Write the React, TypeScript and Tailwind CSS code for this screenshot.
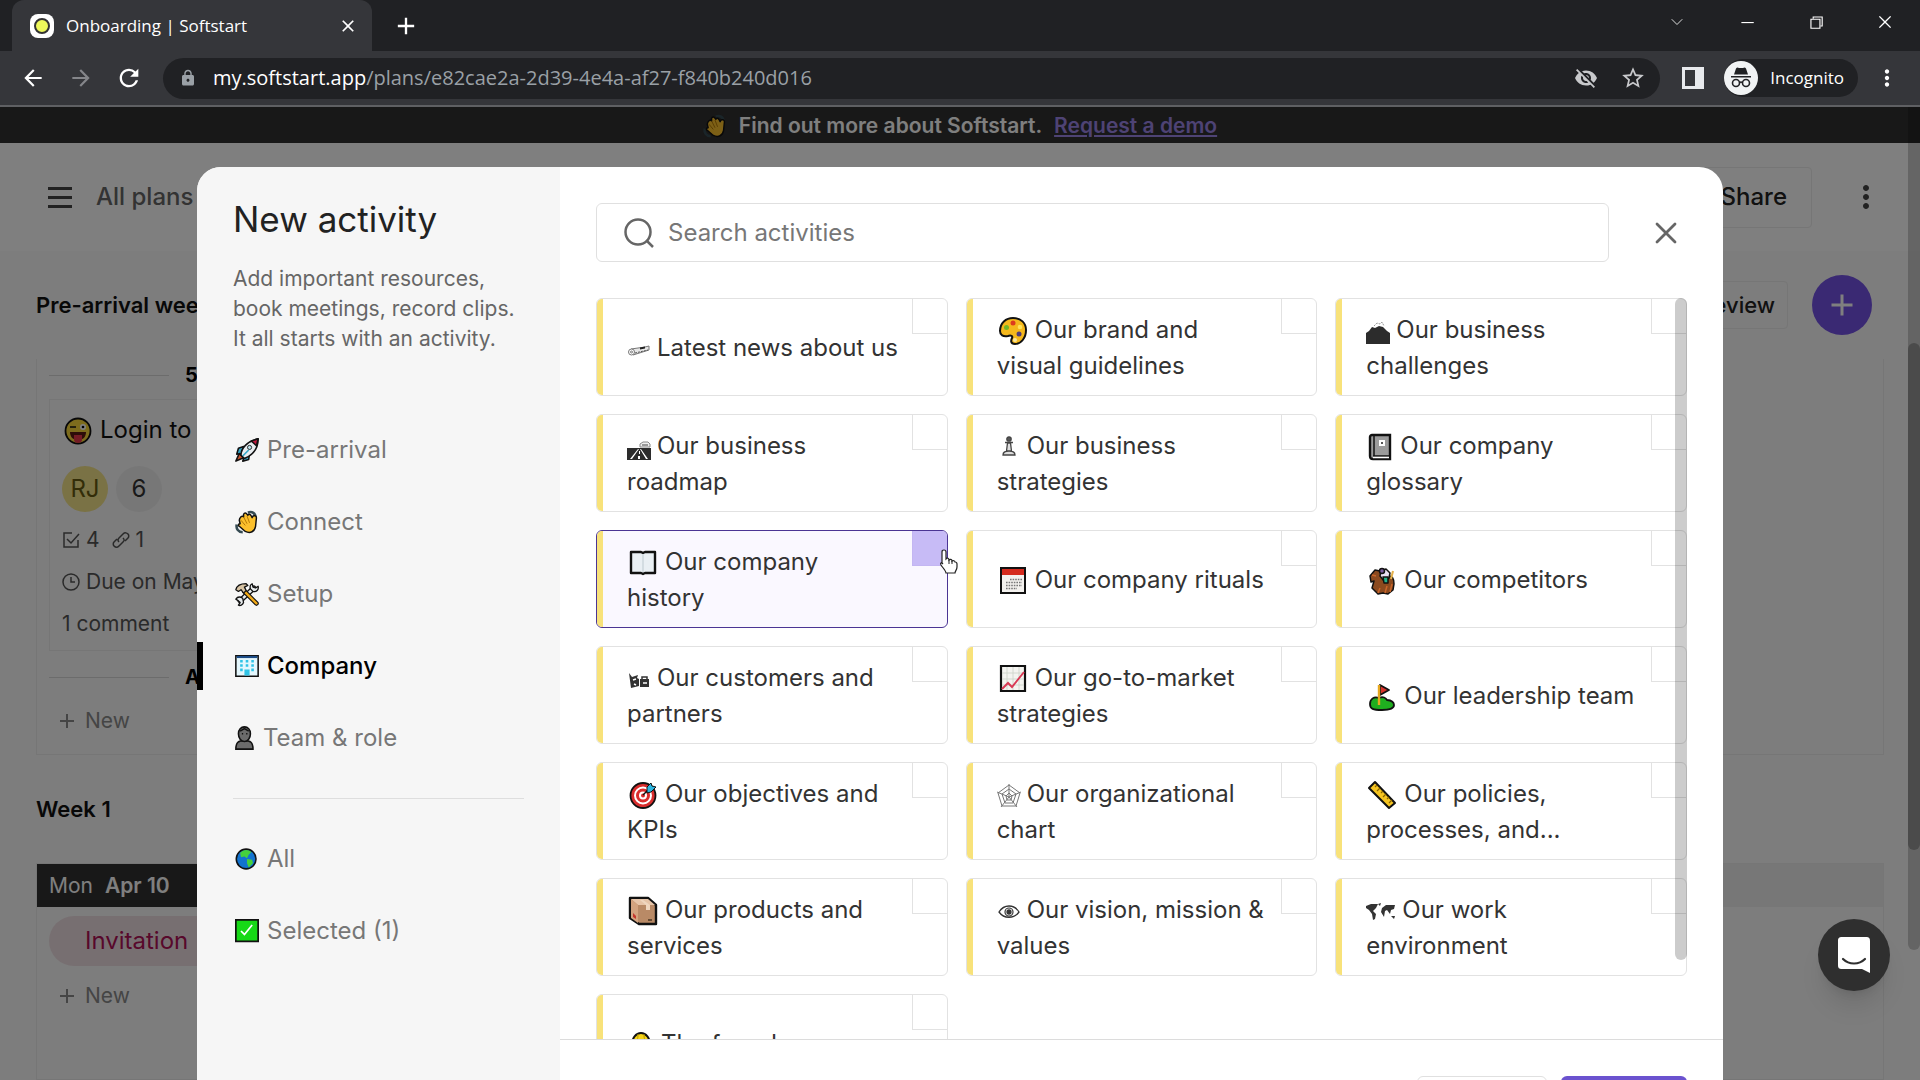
import type { ReactNode } from 'react';
import { ChevronDown } from 'lucide-react';
import {
  MdAdd,
  MdArrowBack,
  MdArrowForward,
  MdClose,
  MdLock,
  MdMoreVert,
  MdRefresh,
  MdStarBorder,
  MdVisibilityOff,
} from 'react-icons/md';
import {
  VscChromeClose,
  VscChromeMinimize,
  VscChromeRestore,
} from 'react-icons/vsc';

// 28x28 drawings, black outline like the system emoji set
const glyphs: Record<string, ReactNode> = {
  rocket: (
    <g stroke="#111" strokeWidth="1.8" strokeLinejoin="round">
      <path d="M10 10 4 12 2 19l6-1zM17 18l-1 7-7 2 2-6z" fill="#35a7c9" />
      <path d="M5 18 1 27l9-4z" fill="#c9532e" />
      <path d="M7 20C7 12 14 4 27 1c0 11-6 19-16 23z" fill="#e9edf0" />
      <path d="M19 3.500 27 1l-2 8z" fill="#c3183f" />
      <circle cx="17" cy="11" r="2.400" fill="#bfe4ee" strokeWidth="1" />
      <path d="M9 21l7-7" stroke="#35a7c9" strokeWidth="2" />
    </g>
  ),
  wave: (
    <g stroke="#111" strokeWidth="1.700" strokeLinejoin="round">
      <path d="M15 3c5-2 9 1 9 6M2 17c-1 5 2 9 7 9" fill="none" stroke="#354a52" strokeWidth="3" />
      <path
        d="M7 8c1-1 2-1 3 0V5c1-2 3-2 4 0l1 1c1-2 3-1 4 1l1 2 1-2c2-1 4 0 4 2l-1 10c-1 6-6 9-12 6L5 19c-2-1-1-3 1-3l-1-4c0-2 1-3 2-4z"
        fill="#fbc02d"
      />
      <path d="M10 8l4 8M14 7l3 8M7 12l5 6" stroke="#a86f00" strokeWidth="1" />
    </g>
  ),
  tools: (
    <g strokeLinecap="round" strokeLinejoin="round">
      <path d="M22 7 6 22" stroke="#111" strokeWidth="6" />
      <path d="M22 7 6 22" stroke="#e8ecee" strokeWidth="3" />
      <path d="M20 2l1 4 3 1 3-2c1 4-2 7-6 6l-3-3c-1-3 0-5 2-6zM1 20c2-3 5-3 8-1l1 5c-1 3-4 4-6 3l2-3-2-2z" fill="#e8ecee" stroke="#111" strokeWidth="1.500" />
      <path d="M11 11l14 14" stroke="#111" strokeWidth="5.500" />
      <path d="M11 11l14 14" stroke="#f0a818" strokeWidth="2.800" />
      <path d="M1 9c1-4 5-7 12-7l2 2-4 2 2 4-3 3-3-4-3 2z" fill="#d8c4a4" stroke="#111" strokeWidth="1.500" />
    </g>
  ),
  office: (
    <g>
      <path d="M1 2h26v24H1z" fill="#e4f7fd" stroke="#111" strokeWidth="1.800" />
      <path d="M2 3.500h24" stroke="#1c4c86" strokeWidth="2.500" />
      <path
        d="M6 7h3v3H6zM12.500 7h3v3h-3zM19 7h3v3h-3zM6 12h3v3H6zM12.500 12h3v3h-3zM19 12h3v3h-3zM6 17h3v3H6zM19 17h3v3h-3zM11 18h6v7h-6z"
        fill="#2fc3e6"
      />
    </g>
  ),
  person: (
    <g fill="#6b6b6b" stroke="#111" strokeWidth="1.800">
      <path d="M1 27c0-8 3-10 10-10s10 2 10 10z" />
      <path d="M4 9c0-5 3-8 7-8s7 3 7 8-3 9-7 9-7-4-7-9z" />
      <path d="M8 9h1.500M13 9h1.500M6 6l5-3 5 3" fill="none" />
    </g>
  ),
  globe: (
    <g>
      <circle cx="13" cy="14" r="11.500" fill="#1273cf" stroke="#111" strokeWidth="1.800" />
      <path d="M6 7c4-5 10-4 13-1l-3 3-2 4-3-2-4 1zM14 14l6 1 1 4-5 5-2-5z" fill="#45d13c" />
    </g>
  ),
  check: (
    <g>
      <path d="M1 1h26v25H1z" fill="#16d916" stroke="#111" strokeWidth="2" />
      <path d="M7 14l4 4 9-11" fill="none" stroke="#fff" strokeWidth="2" />
    </g>
  ),
  wink: (
    <g>
      <circle cx="14" cy="14" r="12.500" fill="#fbd93b" stroke="#111" strokeWidth="1.800" />
      <path d="M6 15h16c0 5-3 8-8 8s-8-3-8-8z" fill="#5b1a12" />
      <path d="M10 18h8v5c0 4-8 4-8 0z" fill="#e8384b" />
      <circle cx="19" cy="10" r="3" fill="#fff" />
      <circle cx="19" cy="10" r="1.300" />
      <path d="M6 10h6" stroke="#111" strokeWidth="1.500" />
    </g>
  ),
  palette: (
    <g>
      <path
        d="M14 1c8 0 13 5 13 12 0 8-5 14-11 14-5 0-4-4-3-6s-1-3-4-2c-5 1-8-1-8-5C1 6 7 1 14 1z"
        fill="#f5b81c"
        stroke="#111"
        strokeWidth="2"
      />
      <circle cx="14" cy="6" r="2.500" fill="#dd3b1e" />
      <circle cx="7.500" cy="10.500" r="2.500" fill="#74b526" />
      <circle cx="21" cy="10" r="2.300" fill="#ffe35a" />
      <circle cx="20" cy="17" r="2.500" fill="#503d7c" />
      <circle cx="16" cy="23" r="2" fill="#f7e7a0" />
    </g>
  ),
  notebook: (
    <g>
      <path d="M4 2h18v24H5c-2 0-3-1-3-3V4c0-1 1-2 2-2z" fill="#9b9b9b" stroke="#111" strokeWidth="2.400" />
      <path d="M6 3v20M5 23h16" stroke="#111" strokeWidth="1.500" />
      <path d="M5 24.500h16" stroke="#fff" strokeWidth="1.500" />
      <path d="M11 7h6v6h-6z" fill="#fff" />
      <path d="M13 9h2v2h-2z" fill="#555" />
    </g>
  ),
  book: (
    <g>
      <path
        d="M2 3h10l2 1 2-1h10v21H16l-2 1-2-1H2z"
        fill="#e9eff4"
        stroke="#111"
        strokeWidth="2.400"
        strokeLinejoin="round"
      />
      <path d="M14 5v18" stroke="#d3dce2" strokeWidth="2" />
    </g>
  ),
  calendar: (
    <g>
      <path d="M2 1h24v25H2z" fill="#f3f1ee" stroke="#111" strokeWidth="2" />
      <path d="M3 2h22v6H3z" fill="#d52b1e" />
      <path d="M11 12.500h12M7 15.500h16M7 18.500h16M7 21.500h11" stroke="#777" strokeWidth="1.600" strokeDasharray="1.600 1" />
    </g>
  ),
  horse: (
    <g stroke="#111" strokeWidth="1.500" strokeLinejoin="round">
      <path d="M2 9l5-6 5 1 3 7 6-2c4 0 5 4 5 8l-1 6-5 4-5-1-5 1-6-6 2-7-3 1z" fill="#8b4a1f" />
      <path d="M12 21l-2 5M19 19l-2 7M24 17l-2 8M4 8l4 1" stroke="#c9652a" />
      <path d="M13 4l5-2 4 4-1 5-5 3-4-5z" fill="#e8e0f4" />
      <path d="M15 10h5v6h-4z" fill="#21b28a" />
      <circle cx="14" cy="4" r="2.500" fill="#7b5ea7" />
      <path d="M25 4l-2 8" stroke="#e3b04b" strokeWidth="2" />
    </g>
  ),
  chart: (
    <g>
      <path d="M2 1h24v25H2z" fill="#f4f4f0" stroke="#111" strokeWidth="2.200" />
      <path d="M8 2v23M14 2v23M20 2v23M3 8h22M3 14h22M3 20h22" stroke="#ccd2c8" strokeWidth="0.800" />
      <path d="M3 24l6-6 4 4 12-15" fill="none" stroke="#d93a55" strokeWidth="2" />
    </g>
  ),
  golf: (
    <g stroke="#111" strokeWidth="1.800" strokeLinejoin="round">
      <path d="M2 21c0-5 4-8 9-6 4-2 7 0 8 2 5 0 7 3 7 5 0 3-3 5-12 5S2 26 2 21z" fill="#1fae1f" />
      <path d="M12 2l9 5-9 5z" fill="#d8342c" />
      <path d="M11 2v20" stroke="#e6a71f" strokeWidth="2.400" />
    </g>
  ),
  target: (
    <g>
      <circle cx="14" cy="14.500" r="12.500" fill="#d92d2d" stroke="#111" strokeWidth="1.800" />
      <circle cx="14" cy="14.500" r="8" fill="none" stroke="#fff" strokeWidth="2" />
      <circle cx="14" cy="14.500" r="3" fill="none" stroke="#fff" strokeWidth="2" />
      <path d="M14 14l9-9" stroke="#111" strokeWidth="1.500" />
      <path d="M18 6l4-4 1 3 4 1-5 5-4 1z" fill="#2bb5e0" stroke="#111" />
    </g>
  ),
  ruler: (
    <g>
      <path d="M7 1 27 22l-6 5L1 7z" fill="#f6c521" stroke="#111" strokeWidth="2" strokeLinejoin="round" />
      <path d="M9 4 7 6M12 7l-3 3M15 10l-2 2M18 13l-3 3M21 16l-2 2M24 19l-3 3" stroke="#8a6500" strokeWidth="1.200" />
    </g>
  ),
  box: (
    <g>
      <path d="M1 1h18l8 7v19H10l-9-6z" fill="#b98a66" stroke="#111" strokeWidth="2.400" strokeLinejoin="round" />
      <path d="M2 2h17l7 6H9z" fill="#e6c4a8" />
      <path d="M9 8v18L2 21V2z" fill="#d3a37f" />
      <path d="M14 3l7 5v5h-4V8l-6-5z" fill="#efd6bf" />
      <path d="M4 16l3 3v3l-3-2z" fill="#c4372d" />
      <path d="M19 23h4" stroke="#4a3422" strokeWidth="1.500" />
    </g>
  ),
  founder: (
    <g>
      <path d="M3 14c0-7 4-12 9-12s9 5 9 12v12H3z" fill="#f6d519" stroke="#111" strokeWidth="2" />
      <path d="M9 3c0 5-1 7-3 9M15 3c0 5 1 7 3 9" fill="none" stroke="#b99700" />
    </g>
  ),
  // text-style glyphs
  news: (
    <g fill="none" stroke="#777" strokeWidth="1">
      <path d="M4 14l14-2 4-1v4L6 20z" fill="#e6e6e6" />
      <circle cx="4.500" cy="17" r="3" fill="#fff" />
      <circle cx="4.500" cy="17" r="1" />
      <path d="M13 12.500l5-1v2l-5 1z" fill="#222" stroke="none" />
      <path d="M8 18l13-3" stroke="#555" strokeDasharray="2 1" />
    </g>
  ),
  mountain: (
    <g fill="#2c2c2c">
      <path d="M0 27V16l3-2 3-4 3 1 4-2 4 1 4 4 3 2v11z" />
      <path d="M8 9l3-3 3 1 2-2 2 4" fill="none" stroke="#999" strokeDasharray="2 1" />
    </g>
  ),
  road: (
    <g>
      <path d="M0 15h24v12H0z" fill="#2c2c2c" />
      <path d="M11 16 3 26h2l7-10zM13 16l6 10h2l-7-10z" fill="#fff" />
      <path d="M12 18h1v3h-1zM11 23h2v3h-2z" fill="#fff" />
      <path d="M13 14v-3l3-2h5l2 2v3z" fill="#eee" stroke="#888" />
      <path d="M15 12h6" stroke="#444" />
    </g>
  ),
  pawn: (
    <g fill="#ddd" stroke="#444" strokeWidth="1.300">
      <circle cx="12" cy="6" r="2.200" fill="#555" />
      <path d="M10.500 10h3l1 8h-5zM8 9.500h8M6 22c0-3 2-4 6-4s6 1 6 4z" />
    </g>
  ),
  partners: (
    <g fill="#333">
      <path d="M2 8l3 4 6-2-1 3 2 1v7l-8 2zM13 14h9v8h-9z" />
      <path d="M15 14v-2h5v2" fill="none" stroke="#333" strokeWidth="1.500" />
      <path d="M6 15l3-1M16 18h4M7 19l2 1" stroke="#fff" strokeWidth="1.500" />
    </g>
  ),
  web: (
    <g fill="none" stroke="#777" strokeWidth="1">
      <path d="M12 4l11 8-4 13H5L1 12zM12 8l7 5-3 9H8l-3-9zM12 12l3 3-1 4h-4l-1-4zM12 3v13M0 11l12 5 12-5M12 16 4 26M12 16l8 10" />
    </g>
  ),
  eye: (
    <g fill="none" stroke="#333" strokeWidth="1.300">
      <path d="M2 15c5-8 15-8 20 0-5 7-15 7-20 0z" />
      <circle cx="12" cy="15" r="4" strokeWidth="1.200" />
      <circle cx="12" cy="15" r="2" fill="#333" />
    </g>
  ),
  map: (
    <g fill="#333">
      <path d="M0 9l5-2 7 0-2 4-3 3 3 3-1 5-2 1-1-6-3-4-3-2zM12 7l3-1-1 3zM16 11l4-3 9 0-1 4-3 1-1 4-3-4-2 1-1 6-3-5z" />
      <path d="M25 19l4 0-1 3z" />
    </g>
  ),
};

const Glyph = ({ name, className = 'h-7 w-7' }: { name: string; className?: string }) => (
  <svg
    viewBox="0 0 28 28"
    preserveAspectRatio="xMinYMid slice"
    overflow="visible"
    className={`inline-block align-[-7px] ${className}`}
    aria-hidden="true"
  >
    {glyphs[name]}
  </svg>
);

const wide = 'h-7 w-7 ml-0.5 mr-2';
const slim = 'h-7 w-6 mr-1.5';
const narrow = 'h-7 w-6 ml-0.5 mr-2';

const activities = [
  { icon: 'news', gap: slim, title: 'Latest news about us' },
  { icon: 'palette', gap: wide, title: 'Our brand and\nvisual guidelines' },
  { icon: 'mountain', gap: slim, title: 'Our business\nchallenges' },
  { icon: 'road', gap: slim, title: 'Our business\nroadmap' },
  { icon: 'pawn', gap: slim, title: 'Our business\nstrategies' },
  { icon: 'notebook', gap: narrow, title: 'Our company\nglossary' },
  { icon: 'book', gap: wide, title: 'Our company\nhistory', selected: true },
  { icon: 'calendar', gap: wide, title: 'Our company rituals' },
  { icon: 'horse', gap: wide, title: 'Our competitors' },
  { icon: 'partners', gap: slim, title: 'Our customers and\npartners' },
  { icon: 'chart', gap: wide, title: 'Our go-to-market\nstrategies' },
  { icon: 'golf', gap: wide, title: 'Our leadership team' },
  { icon: 'target', gap: wide, title: 'Our objectives and\nKPIs' },
  { icon: 'web', gap: slim, title: 'Our organizational\nchart' },
  { icon: 'ruler', gap: wide, title: 'Our policies,\nprocesses, and...' },
  { icon: 'box', gap: wide, title: 'Our products and\nservices' },
  { icon: 'eye', gap: slim, title: 'Our vision, mission &\nvalues' },
  { icon: 'map', gap: 'h-7 w-7 mr-2', title: 'Our work\nenvironment' },
  { icon: 'founder', gap: narrow, title: 'The founders' },
];

const categories = [
  { icon: 'rocket', label: 'Pre-arrival' },
  { icon: 'wave', label: 'Connect' },
  { icon: 'tools', label: 'Setup' },
  { icon: 'office', label: 'Company', active: true },
  { icon: 'person', label: 'Team & role' },
];

const filters = [
  { icon: 'globe', label: 'All' },
  { icon: 'check', label: 'Selected (1)' },
];

const BrowserBar = () => (
  <header className="shrink-0 bg-[#202124] font-['Open_Sans',sans-serif] text-white">
    <div className="flex h-[51px] items-center pl-3">
      <div className="flex h-full w-[360px] items-center rounded-t-xl bg-[#35363a] pl-[18px] pr-3.5">
        <span className="flex size-6 items-center justify-center rounded-lg bg-white">
          <span className="size-4 rounded-full border-2 border-[#333] bg-[#eef85a]" />
        </span>
        <span className="ml-3 flex-1 text-[17px]">Onboarding | Softstart</span>
        <button aria-label="Close tab">
          <MdClose className="size-5" />
        </button>
      </div>
      <button aria-label="New tab" className="ml-5">
        <MdAdd className="size-7" />
      </button>
      <div className="ml-auto flex h-full items-center gap-[51px] pr-[26px] pb-2">
        <button aria-label="Search tabs">
          <ChevronDown className="size-5" strokeWidth={1} />
        </button>
        <button aria-label="Minimize">
          <VscChromeMinimize className="size-[18px]" />
        </button>
        <button aria-label="Restore">
          <VscChromeRestore className="size-[18px]" />
        </button>
        <button aria-label="Close window">
          <VscChromeClose className="size-[18px]" />
        </button>
      </div>
    </div>
    <div className="flex h-14 items-center border-b-2 border-[#5f6063] bg-[#35363a] pl-5">
      <button aria-label="Back">
        <MdArrowBack className="size-[26px]" />
      </button>
      <button aria-label="Forward" className="ml-[22px] text-[#85868a]">
        <MdArrowForward className="size-[26px]" />
      </button>
      <button aria-label="Reload" className="ml-[21px]">
        <MdRefresh className="size-7" />
      </button>
      <div className="ml-5 flex h-[41px] flex-1 items-center rounded-full bg-[#202124] pl-4 pr-3.5">
        <MdLock className="size-[18px] text-[#9aa0a6]" />
        <p className="ml-4 flex-1 text-xl text-[#9aa0a6]">
          <span className="text-white">my.softstart.app</span>
          /plans/e82cae2a-2d39-4e4a-af27-f840b240d016
        </p>
        <MdVisibilityOff className="size-6 text-[#c8c9cc]" />
        <MdStarBorder className="ml-[22px] size-[26px] text-[#c8c9cc]" />
      </div>
      <button aria-label="Side panel" className="ml-[22px]">
        <svg viewBox="0 0 22 22" className="size-[22px]">
          <path d="M0 0h22v22H0zM3 3v16h10V3z" fill="#e8eaed" fillRule="evenodd" />
        </svg>
      </button>
      <button className="ml-5 flex h-[38px] items-center rounded-full bg-[#202124] pr-3.5 text-[17px]">
        <svg viewBox="0 0 34 34" className="mr-3 size-[34px]">
          <circle cx="17" cy="17" r="17" fill="#f1f3f4" />
          <path d="M12 7.500c1-1.500 2-1 3-.5h4c1-.5 2-1 3 .5l2 6H10zM7 15h20v1.500H7z" fill="#202124" />
          <g fill="none" stroke="#202124" strokeWidth="1.600">
            <circle cx="12" cy="22" r="3.500" />
            <circle cx="22" cy="22" r="3.500" />
            <path d="M15.500 21.500c1-.7 2-.7 3 0" />
          </g>
        </svg>
        Incognito
      </button>
      <button aria-label="Menu" className="mr-5 ml-4">
        <MdMoreVert className="size-[26px]" />
      </button>
    </div>
  </header>
);

const NewButton = () => (
  <button className="flex items-center gap-1.5 px-1.5 text-[21px] text-[#8a8a8a]">
    <MdAdd className="size-6" />
    New
  </button>
);

const TimeLabel = ({ children }: { children: ReactNode }) => (
  <div className="flex h-6 items-center gap-4 text-xl font-bold">
    <span className="h-px w-[120px] bg-[#d8d8d8]" />
    {children}
  </div>
);

const PlanPage = () => (
  <div className="flex h-full flex-col">
    <div className="flex h-9 shrink-0 items-center justify-center bg-[#303030] pt-0.5 text-[21px] font-semibold text-white">
      <Glyph name="wave" className="mr-3 size-6" />
      Find out more about Softstart.
      <a href="#demo" className="ml-3 text-[#9c86e8] underline">
        Request a demo
      </a>
    </div>
    <div className="flex h-[108px] shrink-0 items-center bg-white pl-12 pr-9">
      <button aria-label="Open menu" className="flex w-6 flex-col gap-1.5">
        <span className="h-[3px] w-full bg-[#444]" />
        <span className="h-[3px] w-full bg-[#444]" />
        <span className="h-[3px] w-full bg-[#444]" />
      </button>
      <a href="#plans" className="ml-6 text-2xl font-medium text-[#666]">
        All plans
      </a>
      <button className="ml-auto mr-9 h-[61px] rounded border border-[#ececec] px-6 text-2xl font-medium text-[#222]">
        Share
      </button>
      <button aria-label="More" className="text-[#444]">
        <MdMoreVert className="size-9" />
      </button>
    </div>
    <div className="flex min-h-0 flex-1 flex-col bg-[#fafafa] pl-9 pr-9">
      <div className="flex h-[108px] shrink-0 items-center pr-3">
        <h2 className="text-[22px] font-semibold text-[#111]">Pre-arrival week</h2>
        <button className="ml-auto mr-6 h-12 rounded border border-[#ececec] px-3 text-[22px] font-medium text-[#222]">
          Preview
        </button>
        <button
          aria-label="Add activity"
          className="flex size-[60px] items-center justify-center rounded-full bg-[#7453e6] text-white"
        >
          <MdAdd className="size-9" />
        </button>
      </div>
      <section className="h-[396px] shrink-0 border border-t-0 border-[#ececec] px-3 pt-1">
        <TimeLabel>5:00 PM</TimeLabel>
        <article className="mt-3 flex h-[252px] w-[300px] flex-col border border-[#ececec] px-3 pt-3.5 text-[21px] leading-7 text-[#555]">
          <h3 className="text-2xl text-[#111]">
            <Glyph name="wink" className="mr-2 ml-0.5 h-7 w-7" />
            Login to
          </h3>
          <div className="mt-5 flex gap-2 text-2xl text-[#333]">
            <span className="flex size-[46px] items-center justify-center rounded-full bg-[#f5e48a] text-[#665a10]">
              RJ
            </span>
            <span className="flex size-[46px] items-center justify-center rounded-full bg-[#efefef]">6</span>
          </div>
          <p className="mt-3.5 flex items-center gap-1.5">
            <svg viewBox="0 0 18 18" className="size-[18px]" fill="none" stroke="currentColor" strokeWidth="1.500">
              <path d="M10 2H2v14h14V9M5 8l4 4 8-9" />
            </svg>
            4
            <svg viewBox="0 0 18 18" className="ml-1.5 size-[18px]" fill="none" stroke="currentColor" strokeWidth="1.500">
              <path d="M7 11c-2-2-1-3 0-4l4-4c2-2 4-1 5 0s1 3 0 4l-3 3M11 7c2 2 1 3 0 4l-4 4c-2 2-4 1-5 0s-1-3 0-4l3-3" />
            </svg>
            1
          </p>
          <p className="mt-3.5 flex items-center gap-1.5">
            <svg viewBox="0 0 18 18" className="size-[18px]" fill="none" stroke="currentColor" strokeWidth="1.500">
              <circle cx="9" cy="9" r="8" />
              <path d="M9 4v5h4" />
            </svg>
            Due on May
          </p>
          <p className="mt-3.5">1 comment</p>
        </article>
        <div className="mt-3.5 mb-4">
          <TimeLabel>Anytime</TimeLabel>
        </div>
        <NewButton />
      </section>
      <h2 className="flex h-[108px] shrink-0 items-center text-[22px] font-semibold text-[#111]">Week 1</h2>
      <section className="flex min-h-0 flex-1 flex-col border border-[#ececec]">
        <div className="flex h-[43px] shrink-0 bg-[#eeeeee]">
          <p className="flex w-[300px] items-center gap-3 bg-[#303030] px-3 text-[21px] text-white">
            Mon <b className="font-semibold">Apr 10</b>
          </p>
        </div>
        <div className="px-3 pt-[9px]">
          <p className="mb-3.5 flex h-[50px] w-[280px] items-center rounded-full bg-[#efdfe3] pl-9 text-2xl text-[#b01057]">
            Invitation
          </p>
          <NewButton />
        </div>
      </section>
    </div>
  </div>
);

const Sidebar = () => (
  <aside className="w-[363px] shrink-0 bg-[#f6f6f6] pt-[31px] text-[#777]">
    <h1 className="pl-9 text-[35px] leading-[42px] text-[#222]">New activity</h1>
    <p className="mt-6 pl-9 text-[21px] leading-[30px] text-[#666]">
      Add important resources,
      <br />
      book meetings, record clips.
      <br />
      It all starts with an activity.
    </p>
    <nav className="mt-[72px] flex flex-col gap-6 text-2xl">
      {categories.map(({ icon, label, active }) => (
        <a
          key={label}
          href={`#${icon}`}
          className={
            active
              ? 'flex h-12 items-center gap-2 border-l-6 border-black pl-8 font-medium text-black'
              : 'flex h-12 items-center gap-2 pl-[38px]'
          }
        >
          <Glyph name={icon} className={icon === 'person' ? 'size-6 -mr-1' : 'size-6'} />
          {label}
        </a>
      ))}
      <hr className="mx-9 my-3 border-[#dedede]" />
      {filters.map(({ icon, label }) => (
        <a key={label} href={`#${icon}`} className="flex h-12 items-center gap-2 pl-[38px]">
          <Glyph name={icon} className="size-6" />
          {label}
        </a>
      ))}
    </nav>
  </aside>
);

const ActivityCard = ({ icon, gap, title, selected }: (typeof activities)[number]) => (
  <label
    className={
      selected
        ? 'relative flex h-[98px] items-center overflow-hidden rounded-md border border-[#4b3594] bg-[#faf8ff] text-[#333]'
        : 'relative flex h-[98px] items-center overflow-hidden rounded-md border border-[#e2e2e2] bg-white text-[#333]'
    }
  >
    <span className="h-full w-1.5 bg-[#f8e27a]" />
    <span className="whitespace-pre-line pt-px pl-6 text-2xl leading-9">
      <Glyph name={icon} className={gap} />
      {title}
    </span>
    <input
      type="checkbox"
      defaultChecked={selected}
      className="absolute top-0 right-0 size-[35px] appearance-none border-b border-l border-[#e2e2e2] checked:border-[#c3b6f2] checked:bg-[#c7bbf6]"
    />
  </label>
);

const HandCursor = () => (
  <svg viewBox="0 0 20 26" className="pointer-events-none absolute top-[18px] -right-2.5 z-10 h-[26px] w-5">
    <path
      d="M6 2c2 0 2 1 2 2v7l1-1c1 0 2 0 2 2 1-1 3-1 3 1 1-1 3 0 3 1 1 0 2 0 2 2v3c0 3-2 4-2 6H8c0-2-3-5-5-8-1-2 0-3 2-1l-1-1V4c0-1 0-2 2-2z"
      fill="#fff"
      stroke="#222"
      strokeWidth="1.200"
    />
    <path d="M11 12v4M14 13v3" stroke="#222" />
  </svg>
);

const ActivityModal = () => (
  <div
    role="dialog"
    aria-label="New activity"
    className="flex h-full min-w-0 flex-1 overflow-hidden rounded-t-3xl bg-white"
  >
    <Sidebar />
    <div className="flex min-w-0 flex-1 flex-col">
      <div className="flex items-center px-9 pt-9">
        <label className="flex h-[59px] flex-1 items-center rounded-md border border-[#e0e0e0] pl-[27px]">
          <svg viewBox="0 0 30 30" className="mr-3.5 size-[30px]" fill="none" stroke="#666" strokeWidth="2.500">
            <circle cx="14" cy="14" r="12.500" />
            <path d="M22.500 22.500 29 29" />
          </svg>
          <input
            type="text"
            aria-label="Search activities"
            placeholder="Search activities"
            className="flex-1 text-2xl placeholder-[#777] outline-none"
          />
        </label>
        <button aria-label="Close" className="ml-[42px] mr-1.5 text-[#666]">
          <svg viewBox="0 0 30 30" className="size-[30px]" fill="none" stroke="currentColor" strokeWidth="2.800">
            <path d="M6 6l18 18M24 6 6 24" strokeLinecap="round" />
          </svg>
        </button>
      </div>
      <div className="relative mt-9 min-h-0 flex-1 overflow-hidden px-9">
        <div className="grid grid-cols-3 gap-[18px]">
          {activities.map((activity) => (
            <div key={activity.title} className="relative">
              <ActivityCard {...activity} />
              {activity.selected && <HandCursor />}
            </div>
          ))}
        </div>
        <span className="absolute top-0 right-9 h-[662px] w-3 rounded-full bg-black/20" />
      </div>
      <footer className="flex h-[41px] shrink-0 justify-end gap-3.5 overflow-hidden border-t border-[#dcdcdc] px-9 pt-9">
        <button aria-label="Cancel" className="h-14 w-[130px] shrink-0 rounded-md border border-[#e0e0e0]" />
        <button aria-label="Add" className="h-14 w-[126px] shrink-0 rounded-md bg-[#6b52cf]" />
      </footer>
    </div>
  </div>
);

const App = () => (
  <div className="flex h-screen flex-col overflow-hidden font-[Inter,sans-serif]">
    <BrowserBar />
    <main className="relative min-h-0 flex-1 overflow-hidden">
      <PlanPage />
      <div className="absolute inset-0 flex bg-black/50 px-[197px] pt-[60px]">
        <ActivityModal />
      </div>
      <span className="absolute top-0 right-0 h-[843px] w-3 rounded-b-full bg-black/20" />
      <span className="absolute top-[236px] right-0 h-[507px] w-3 rounded-full bg-black/25" />
      <button
        aria-label="Open chat"
        className="absolute right-[30px] bottom-[89px] flex size-[72px] items-center justify-center rounded-full bg-[#2f2f2f] shadow-xl"
      >
        <svg viewBox="0 0 32 36" className="h-9 w-8">
          <path d="M4 0h24c3 0 4 1 4 4v32l-8-4H4c-3 0-4-1-4-4V4c0-3 1-4 4-4z" fill="#fff" />
          <path d="M5 22c6 6 16 6 22 0" fill="none" stroke="#2f2f2f" strokeWidth="2.200" strokeLinecap="round" />
        </svg>
      </button>
    </main>
  </div>
);

export default App;
